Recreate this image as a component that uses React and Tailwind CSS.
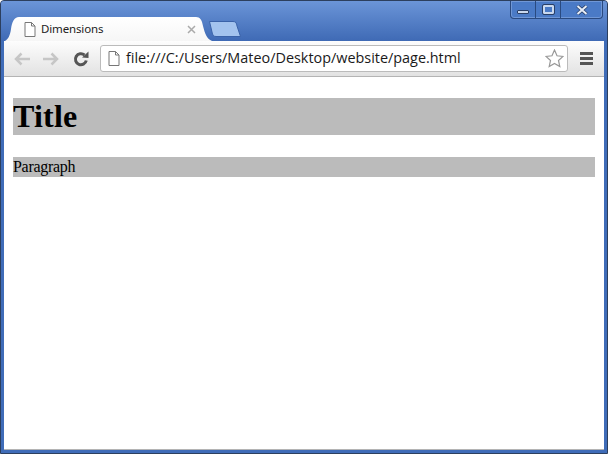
function PageIcon({ className }) {
  return (
    <svg className={className} width="12" height="15" viewBox="0 0 12 15" fill="none">
      <path d="M1 .5h6.500L11 4v10.500H1z" fill="#fff" stroke="#777" />
      <path d="M7.500 .5V4H11" stroke="#777" />
    </svg>
  );
}

function Tab() {
  return (
    <div className="relative w-[207px] h-[24px] shrink-0">
      <svg className="absolute inset-0" width="207" height="24" viewBox="0 0 207 24">
        <defs>
          <linearGradient id="tab" x1="0" y1="0" x2="0" y2="1">
            <stop offset="0" stopColor="#ffffff" />
            <stop offset="1" stopColor="#f6f6f6" />
          </linearGradient>
        </defs>
        <path
          d="M0 24C3 22 5 19 6 12C7 5 9 0 14 0H191C195 0 197 3 198 9C200 17 202 22 207 24Z"
          fill="url(#tab)"
        />
      </svg>
      <div className="relative flex items-center h-full pl-[19px]">
        <PageIcon />
        <span className="ml-[5px] w-[62px] whitespace-nowrap text-[11.500px] leading-none font-['Noto_Sans',sans-serif] text-[#222] tracking-[-0.15px]">Dimensions</span>
        <svg className="ml-[84px]" width="9" height="9" viewBox="0 0 9 9" stroke="#aaa" strokeWidth="1.500">
          <path d="M1 1l7 7M8 1l-7 7" />
        </svg>
      </div>
    </div>
  );
}

function NewTab() {
  return (
    <svg className="mb-[4px] -ml-[3px] shrink-0" width="32" height="16" viewBox="0 0 32 16">
      <path
        d="M.5 .5H24C27 .5 27.500 2 28 5L31.500 15.500H7C4.500 15.500 3.500 14 3 11L.5 .5Z"
        fill="#a3c3ee"
        stroke="#3a62a8"
      />
    </svg>
  );
}

function WindowControls() {
  return (
    <div className="ml-auto self-start flex h-[18px] mr-[4px] border border-t-0 border-[#2a4a80] rounded-b-[4px] bg-[#4a7ac6] shadow-[inset_0_0_0_1px_#7097d6]">
      <div className="w-[25px] flex items-center justify-center border-r border-[#2a4a80]">
        <div className="w-[12px] h-[4px] mt-[4px] bg-[#c9d8ee] border border-[#2a3f66] rounded-[1px]" />
      </div>
      <div className="w-[25px] flex items-center justify-center border-r border-[#2a4a80]">
        <div className="w-[11px] h-[9px] border-2 border-[#c9d8ee] outline outline-[#2a3f66] rounded-[1px]" />
      </div>
      <div className="w-[41px] flex items-center justify-center">
        <svg width="12" height="10" viewBox="0 0 12 10">
          <path d="M1.500 1l9 8M10.500 1l-9 8" stroke="#2a3f66" strokeWidth="3.500" />
          <path d="M1.500 1l9 8M10.500 1l-9 8" stroke="#e6edf8" strokeWidth="2" />
        </svg>
      </div>
    </div>
  );
}

function Arrow({ flip }) {
  return (
    <svg className={flip ? "rotate-180" : ""} width="16" height="14" viewBox="0 0 16 14" fill="none" stroke="#c6c6c6" strokeWidth="2.500">
      <path d="M7.500 1.500L2 7l5.500 5.500M2 7h14" />
    </svg>
  );
}

function Toolbar() {
  return (
    <div className="h-[36px] flex items-center bg-gradient-to-b from-[#fdfdfd] to-[#e2e2e2] border-b border-[#b4b4b4] pl-[10px]">
      <Arrow />
      <div className="w-[13px]" />
      <Arrow flip />
      <svg className="ml-[14px]" width="16" height="16" viewBox="0 0 16 16" fill="none">
        <path d="M13.300 9.500A5.500 5.500 0 1 1 11.500 4" stroke="#555" strokeWidth="3" />
        <path d="M9 6.500L15.500 7V.5z" fill="#555" />
      </svg>
      <div className="ml-[11px] w-[468px] h-[27px] flex items-center bg-white border border-[#bbb] rounded-[3px] pl-[7px] pr-[3px]">
        <PageIcon />
        <span className="ml-[6px] text-[14.400px] leading-none font-['Open_Sans',sans-serif] text-[#1a1a1a]">
          file:///C:/Users/Mateo/Desktop/website/page.html
        </span>
        <svg className="ml-auto" width="19" height="19" viewBox="0 0 19 19" fill="#fff" stroke="#999" strokeWidth="1.200">
          <path d="M9.500 1l2.500 5.800 6 .6-4.500 4.100 1.300 6L9.500 14.400 4.200 17.500l1.300-6L1 7.400l6-.6z" />
        </svg>
      </div>
      <div className="ml-[12px] w-[13px] flex flex-col gap-[2px]">
        <div className="h-[3px] bg-[#555]" />
        <div className="h-[3px] bg-[#555]" />
        <div className="h-[3px] bg-[#555]" />
      </div>
    </div>
  );
}

export default function App() {
  return (
    <div className="w-[608px] h-[454px] flex flex-col bg-[#3f6cb8] border border-[#2c3f5e] rounded-t-[4px] overflow-hidden">
      {/* Title bar */}
      <div className="h-[40px] shrink-0 flex items-end pl-[4px] bg-gradient-to-b from-[#6b95d8] to-[#3f6ab5]">
        <Tab />
        <NewTab />
        <WindowControls />
      </div>

      {/* Browser body */}
      <div className="flex-1 flex flex-col mx-[3px] mb-[3px] bg-white border-b border-[#b4b4b4]">
        <Toolbar />
        <div className="flex-1 bg-white p-[9px] pt-[21px] font-['Liberation_Serif',serif] text-black">
          <h1 className="h-[37px] mb-[22px] bg-[#bbbbbb] text-[32px] leading-[37px] font-bold tracking-[0.2px]">Title</h1>
          <p className="h-[20px] bg-[#bbbbbb] text-[16px] leading-[20px] tracking-[-0.3px]">Paragraph</p>
        </div>
      </div>
    </div>
  );
}
